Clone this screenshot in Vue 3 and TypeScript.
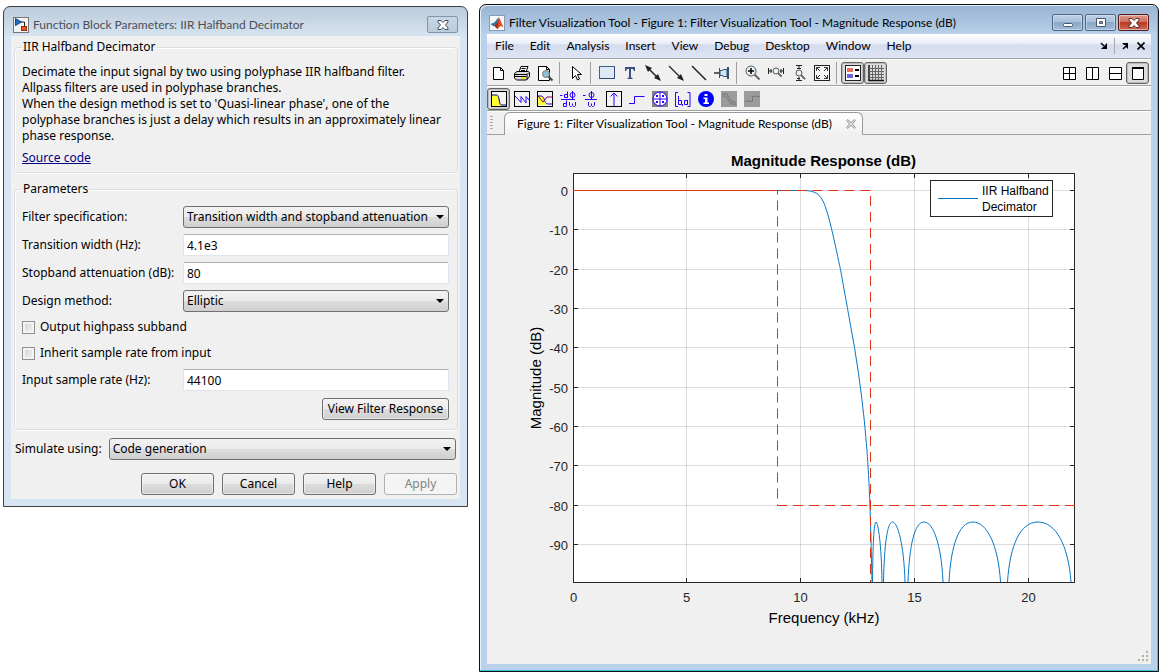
<script setup lang="ts">
import { ref } from 'vue'

interface Tool { id: string; label: string; art: string; active?: boolean; disabled?: boolean }

const spec = ref('Transition width and stopband attenuation')
const width = ref('4.1e3')
const attenuation = ref('80')
const method = ref('Elliptic')
const highpass = ref(false)
const inherit = ref(false)
const rate = ref('44100')
const simulate = ref('Code generation')

const menus = ['File', 'Edit', 'Analysis', 'Insert', 'View', 'Debug', 'Desktop', 'Window', 'Help']

const frame = '<rect x="1.5" y="1.5" width="15" height="15" fill="#f4f4f4" stroke="#000"/>'
const lens = (cx: number, cy: number, r: number, k: number) =>
  `<path d="M${cx + r * 0.7} ${cy + r * 0.7}l${k} ${k}" stroke="#666" stroke-width="2"/><circle cx="${cx}" cy="${cy}" r="${r}" fill="#e4f2fb" stroke="#555"/>`

const fileTools: Tool[] = [
  { id: 'new', label: 'New', art: '<path d="M3.500 3.500h7l3 3v9h-10z" fill="#fff" stroke="#000"/><path d="M10.500 3.500v3h3" fill="none" stroke="#000"/>' },
  { id: 'print', label: 'Print', art: '<path d="M6 8l2-5.500h7l-2 5.500" fill="#fff" stroke="#000"/><path d="M8.500 4.500h4M8 6.500h4" stroke="#000"/><path d="M1.500 9.500l2.500-2h11.500l1 1v4l-3 3.500h-10l-2-2z" fill="#ddd" stroke="#000"/><path d="M2 10.500h12l2-2M2 12.500h11M14 10.500v5" stroke="#000" fill="none"/><path d="M8 13h5v2h-5z" fill="#ee2"/>' },
  { id: 'preview', label: 'Print Preview', art: '<path d="M2.500 2.500h8l3 3v11h-11z" fill="#fff" stroke="#000"/><path d="M10.500 2.500v3h3" fill="none" stroke="#000"/><path d="M12 12l4.500 4.500" stroke="#444" stroke-width="2"/><circle cx="10" cy="10" r="3.500" fill="#8fc0d8" stroke="#777"/>' },
]
const pointerTools: Tool[] = [
  { id: 'pointer', label: 'Edit Plot', art: '<path d="M5.500 2.500v12l3-3 2 4.500 2-1-2-4.500h4z" fill="#fff" stroke="#000"/>' },
]
const drawTools: Tool[] = [
  { id: 'rect', label: 'Rectangle', art: '<rect x="1.500" y="2.500" width="15" height="12" fill="#dfe9f6" stroke="#41618f"/><path d="M16.500 3v11.500h-15" fill="none" stroke="#2e4a78"/>' },
  { id: 'text', label: 'Text Box', art: '<path d="M4 3h10v4h-1l-1-2h-2v8.500l1.500.5v1h-5v-1l1.500-.5v-8.500h-2l-1 2h-1z" fill="#36537f"/>' },
  { id: 'double', label: 'Double Arrow', art: '<path d="M3 3l12 12" stroke="#222" stroke-width="1.500"/><path d="M1 1l7 3-4 4zM17 17l-7-3 4-4z" fill="#222"/>' },
  { id: 'arrow', label: 'Arrow', art: '<path d="M2 2l12 12" stroke="#222" stroke-width="1.300"/><path d="M17 17l-7-3 4-4z" fill="#222"/>' },
  { id: 'line', label: 'Line', art: '<path d="M2 2l14 14" stroke="#222" stroke-width="1.500"/>' },
  { id: 'pin', label: 'Pin', art: '<path d="M1 9h5" stroke="#333" stroke-width="1.500"/><path d="M6.500 4v10M14.500 3v12M15.500 3v12" stroke="#34516e"/><path d="M7 6.500h2l2-1h3v7h-3l-2-1h-2z" fill="#cfe6f5" stroke="#34516e"/>' },
]
const zoomTools: Tool[] = [
  { id: 'zoom', label: 'Zoom', art: lens(7, 7, 5, 5) + '<path d="M4 7h6M7 4v6" stroke="#000" stroke-width="1.500"/>' },
  { id: 'zoomx', label: 'Zoom X', art: lens(9, 7, 3, 3.5) + '<path d="M1.500 4v6M16.500 4v6M2 7h3M13 7h3M4 5v4M14 5v4" stroke="#222"/>' },
  { id: 'zoomy', label: 'Zoom Y', art: lens(9, 9, 3, 4) + '<path d="M6 1.500h6M6 16.500h6M9 2v3M9 13v3M7 4.500h4M7 14.500h3" stroke="#222"/>' },
  { id: 'fit', label: 'Full View', art: '<rect x="1.500" y="1.500" width="15" height="15" fill="#f7f7f7" stroke="#222"/><path d="M3.500 7v-3.500h3.500M11 3.500h3.500v3.500M14.500 11v3.500h-3.500M7 14.500h-3.500v-3.500M4 4l3 3M14 4l-3 3M14 14l-3-3M4 14l3-3" stroke="#333" fill="none"/>' },
]
const viewTools: Tool[] = [
  { id: 'legend', label: 'Legend', active: true, art: '<rect x="1.500" y="1.500" width="15" height="15" fill="#fff" stroke="#222"/><path d="M3 4h6v4h-6z" fill="#e8705c"/><path d="M3 10h6v4h-6z" fill="#6a63d8"/><path d="M11 6h4M11 12h4" stroke="#000" stroke-width="2"/>' },
  { id: 'grid', label: 'Grid', active: true, art: '<path d="M2 1v15.500h15" stroke="#111" fill="none" stroke-width="1.500"/><path d="M5.500 1v15M8.500 1v15M11.500 1v15M14.500 1v15M2 4.500h15M2 7.500h15M2 10.500h15M2 13.500h15" stroke="#666"/>' },
]
const layoutTools: Tool[] = [
  { id: 'quad', label: 'Tile', art: '<path d="M3.500 3.500h12v12h-12zM9.500 3.500v12M3.500 9.500h12" fill="#fff" stroke="#000"/>' },
  { id: 'cols', label: 'Left/Right Tile', art: '<path d="M3.500 3.500h12v12h-12zM9.500 3.500v12" fill="#fff" stroke="#000"/>' },
  { id: 'rows', label: 'Top/Bottom Tile', art: '<path d="M3.500 3.500h12v12h-12zM3.500 9.500h12" fill="#fff" stroke="#000"/>' },
  { id: 'max', label: 'Maximize', active: true, art: '<path d="M3.500 3.500h11v12h-11z" fill="#fff" stroke="#000"/><path d="M3 4h12" stroke="#000" stroke-width="2"/>' },
]
const blue = 'stroke="#2a00ff" fill="none"'
const analysisTools: Tool[] = [
  { id: 'mag', label: 'Magnitude Response', active: true, art: frame + '<path d="M2 5h5c3 0 2 9 5 11h-10z" fill="#ffff30"/><path d="M2 5h4.500c3.500 0 2 10 5 10h5" stroke="#000080" fill="none"/>' },
  { id: 'phase', label: 'Phase Response', art: frame + `<path d="M2 6l6 6.500v-6l5 6.500v-6.500l3.500 4" ${blue}/>` },
  { id: 'both', label: 'Magnitude and Phase', art: frame + `<path d="M2 6h3c4 0 3 7 6 9h-9z" fill="#ffff30"/><path d="M2 6h3c4 0 3 8 7 8h4" ${blue}/><path d="M2 6l5 6 4-5h5.500" stroke="#800060" fill="none"/>` },
  { id: 'group', label: 'Group Delay', art: `<path d="M1 5.500h2.500M8.500 1.500v6.500M8.500 4.500h-3v3h3M13.500 1v8" ${blue}/><circle cx="13.500" cy="5" r="2.500" ${blue}/><path d="M2 9.500h14M7.500 10.500v6M7.500 13.500h-3v3h3M10.500 12v3.500l1 1h1l1-1 1 1h1l1-1v-3.500M13.500 13.500v2" ${blue}/>` },
  { id: 'pdelay', label: 'Phase Delay', art: `<path d="M1 5.500h2.500M9.500 1v8M3 9.500h12M6.500 12v3.500l1 1h1l1-1 1 1h1l1-1v-3.500M9.500 13.500v2" ${blue}/><circle cx="9.500" cy="5" r="2.500" ${blue}/>` },
  { id: 'impulse', label: 'Impulse Response', art: frame + `<path d="M9 3v13M5.500 6.500l3.500-3.500 3.500 3.500" ${blue}/>` },
  { id: 'step', label: 'Step Response', art: `<path d="M1 13.500h5.500v-7h10" ${blue}/>` },
  { id: 'pz', label: 'Pole-Zero Plot', art: '<path d="M1 1h16v16h-16z" fill="#808080"/><circle cx="9" cy="9" r="7" fill="#fff" stroke="#2a00ff"/><path d="M9 2v14M2 9h14M5 5l2 2M7 5l-2 2M11 5l2 2M13 5l-2 2M5 11l2 2M7 11l-2 2M11 11l2 2M13 11l-2 2" stroke="#2a00ff"/>' },
  { id: 'coef', label: 'Filter Coefficients', art: `<path d="M4 2.500h-2.500v14h2.500M13.500 2.500h2.500v14h-2.500M4.500 6v8.500M4.500 10.500h3v4h-3M13.500 10v5M13.500 10.500h-3v4h3M8.500 14v2" ${blue}/>` },
  { id: 'info', label: 'Filter Information', art: '<circle cx="9" cy="9" r="8" fill="#0000ff"/><path d="M7.500 4h3v2h-3zM6.500 7.500h4v5h1.500v1.500h-5.500v-1.500h1.500v-3.500h-1.500z" fill="#fff"/>' },
  { id: 'mask', label: 'Magnitude Response Estimate', disabled: true, art: '<path d="M1 1h16v16h-16z" fill="#9b9b9b"/><path d="M2 6h4l5 8h5M2 4h5l5 8h4" stroke="#777" fill="none"/>' },
  { id: 'noise', label: 'Round-off Noise', disabled: true, art: '<path d="M1 1h16v16h-16z" fill="#9b9b9b"/><path d="M2 11.500h3v-1l2 1h2.500v-5h3l1-1v1h3" stroke="#777" fill="none"/>' },
]
const topGroups: Tool[][] = [fileTools, pointerTools, drawTools, zoomTools, viewTools]

// Plot geometry in user units of the figure's view box.
const yTicks = [0, -10, -20, -30, -40, -50, -60, -70, -80, -90].map(v => ({ v, y: Math.round(190 - v * 3.935) + 0.5 }))
const xTicks = [0, 5, 10, 15, 20].map(v => ({ v, x: Math.floor(573 + v * 22.75) + 0.5 }))

const passband = 'M573.5 190.500H800C811 190.500 818 191 823 201C829 213 836 249 840.500 269.500L847.500 308.500L854.500 347.500C860 381 864 413 866.500 445C869 475 870.500 510 872 582.500'
const lobes = [[872.5, 876, 882], [883.5, 892.5, 905], [908, 924, 943], [949, 973, 1000.5], [1007.5, 1038, 1071]]
const lobePath = lobes.map(([a, p, b]) => {
  const l = p - a
  const r = b - p
  return `M${a} 582C${a + l * 0.08} 545 ${a + l * 0.42} 522 ${p} 522S${b - r * 0.08} 545 ${b} 582`
}).join('')
</script>

<template>
  <main class="desktop">
    <section class="dialog">
      <header class="dialog-title">
        <svg class="app-icon" viewBox="0 0 16 16" aria-hidden="true">
          <rect x=".5" y=".5" width="15" height="15" fill="#f4f4f4" stroke="#777" />
          <path d="M2.500 1.500v7l6-3.500z" fill="#1c6fc0" stroke="#0b4a8c" />
          <path d="M8 5h3.500v5" fill="none" stroke="#222" />
          <rect x="8.500" y="9.500" width="5" height="4" fill="#e8552b" stroke="#a02c10" />
        </svg>
        <h1>Function Block Parameters: IIR Halfband Decimator</h1>
        <button class="dialog-close" type="button" aria-label="Close">
          <svg viewBox="0 0 12 10"><path d="M1 .5h3l2 2 2-2h3v1.500l-2.500 3 2.500 3v1.500h-3l-2-2-2 2h-3v-1.500l2.500-3-2.500-3z" fill="#fff" stroke="#444b58" /></svg>
        </button>
      </header>
      <form class="dialog-body" @submit.prevent>
        <fieldset class="about">
          <legend>IIR Halfband Decimator</legend>
          <p>Decimate the input signal by two using polyphase IIR halfband filter.<br>Allpass filters are used in polyphase branches.<br>When the design method is set to 'Quasi-linear phase', one of the<br>polyphase branches is just a delay which results in an approximately linear<br>phase response.</p>
          <a href="#">Source code</a>
        </fieldset>
        <fieldset class="params">
          <legend>Parameters</legend>
          <div class="row">
            <label for="spec">Filter specification:</label>
            <select id="spec" v-model="spec"><option>Transition width and stopband attenuation</option></select>
          </div>
          <div class="row">
            <label for="tw">Transition width (Hz):</label>
            <input id="tw" v-model="width" type="text">
          </div>
          <div class="row">
            <label for="att">Stopband attenuation (dB):</label>
            <input id="att" v-model="attenuation" type="text">
          </div>
          <div class="row">
            <label for="method">Design method:</label>
            <select id="method" v-model="method"><option>Elliptic</option></select>
          </div>
          <label class="check"><input v-model="highpass" type="checkbox">Output highpass subband</label>
          <label class="check"><input v-model="inherit" type="checkbox">Inherit sample rate from input</label>
          <div class="row">
            <label for="rate">Input sample rate (Hz):</label>
            <input id="rate" v-model="rate" type="text">
          </div>
          <button class="push view" type="button">View Filter Response</button>
        </fieldset>
        <div class="simulate">
          <label for="sim">Simulate using:</label>
          <select id="sim" v-model="simulate"><option>Code generation</option></select>
        </div>
        <div class="actions">
          <button class="push" type="button">OK</button>
          <button class="push" type="button">Cancel</button>
          <button class="push" type="button">Help</button>
          <button class="push" type="button" disabled>Apply</button>
        </div>
      </form>
    </section>

    <section class="tool">
      <header class="tool-title">
        <svg class="app-icon" viewBox="0 0 16 16" aria-hidden="true">
          <rect x=".5" y=".5" width="15" height="15" fill="#f4f6fa" stroke="#8a99ad" />
          <path d="M1.500 9l4-1.500 3-4 1.500-1-2 6-3 3z" fill="#2a6ea8" />
          <path d="M10 2.500c1.500 2 2.500 6 4.500 9.500l-3-1-3 3-3-3 2.500-2z" fill="#d9541e" />
          <path d="M10 2.500c-.5 3-2 6-4.500 8.500l3 3z" fill="#a02a14" />
        </svg>
        <h1>Filter Visualization Tool - Figure 1: Filter Visualization Tool - Magnitude Response (dB)</h1>
        <div class="window-buttons">
          <button type="button" aria-label="Minimize"><svg viewBox="0 0 12 10"><rect x="1.500" y="5.500" width="9" height="3" rx="1" fill="#fff" stroke="#4b5666" /></svg></button>
          <button type="button" aria-label="Restore"><svg viewBox="0 0 12 10"><path d="M1.500.5h9v8h-9zM4.500 3.500v2h3v-2z" fill="#fff" fill-rule="evenodd" stroke="#4b5666" /></svg></button>
          <button class="red" type="button" aria-label="Close"><svg viewBox="0 0 12 10"><path d="M1 .5h3l2 2 2-2h3v1.500l-2.500 3 2.500 3v1.500h-3l-2-2-2 2h-3v-1.500l2.500-3-2.500-3z" fill="#fff" stroke="#5a3030" /></svg></button>
        </div>
      </header>
      <div class="tool-body">
        <nav class="menu">
          <button v-for="m in menus" :key="m" type="button">{{ m }}</button>
          <span class="dock">
            <button type="button" aria-label="Dock"><svg viewBox="0 0 8 8"><path d="M1 1l4 4" fill="none" stroke="#000" stroke-width="1.500" /><path d="M7 1v6h-6l2-2h2v-2z" /></svg></button>
            <i></i>
            <button type="button" aria-label="Undock"><svg viewBox="0 0 8 8"><path d="M1 1h6v6l-2-2v-2h-2z" /><path d="M2 7l4-4" stroke="#000" stroke-width="1.500" /></svg></button>
            <button class="shut" type="button" aria-label="Close figure"><svg viewBox="0 0 8 8"><path d="M.5.5l7 7M7.500.5l-7 7" stroke="#000" stroke-width="1.700" /></svg></button>
          </span>
        </nav>
        <div class="bar">
          <div v-for="(g, i) in topGroups" :key="i" class="group">
            <button v-for="t in g" :key="t.id" type="button" :class="['icon', { active: t.active }]" :aria-label="t.label">
              <svg viewBox="0 0 18 18" v-html="t.art"></svg>
            </button>
          </div>
          <div class="group right">
            <button v-for="t in layoutTools" :key="t.id" type="button" :class="['icon', { active: t.active }]" :aria-label="t.label">
              <svg viewBox="0 0 18 18" v-html="t.art"></svg>
            </button>
          </div>
        </div>
        <div class="bar second">
          <button v-for="t in analysisTools" :key="t.id" type="button" :class="['icon', { active: t.active }]" :aria-label="t.label" :disabled="t.disabled">
            <svg viewBox="0 0 18 18" v-html="t.art"></svg>
          </button>
        </div>
        <div class="tabs">
          <span class="grip"></span>
          <div class="tab">
            <span>Figure 1: Filter Visualization Tool - Magnitude Response (dB)</span>
            <button type="button" aria-label="Close tab"><svg viewBox="0 0 10 10"><path d="M1.500.5l3.500 3 3.500-3 1 1-3 3.500 3 3.500-1 1-3.500-3-3.500 3-1-1 3-3.500-3-3.500z" fill="#ddd" stroke="#999" /></svg></button>
          </div>
          <span class="rest"></span>
        </div>
        <div class="figure">
          <svg class="plot" viewBox="487 135 664 528" role="img" aria-label="Magnitude Response (dB)">
            <rect x="573.5" y="173.5" width="501" height="409" fill="#fff" />
            <g class="grid">
              <path v-for="t in xTicks" :key="'gx' + t.v" :d="`M${t.x} 174V582`" />
              <path v-for="t in yTicks" :key="'gy' + t.v" :d="`M574 ${t.y}H1074`" />
            </g>
            <g class="axis">
              <rect x="573.5" y="173.5" width="501" height="409" />
              <path v-for="t in xTicks" :key="'tx' + t.v" :d="`M${t.x} 173v5M${t.x} 583v-5`" />
              <path v-for="t in yTicks" :key="'ty' + t.v" :d="`M573 ${t.y}h5M1075 ${t.y}h-5`" />
            </g>
            <path class="curve" :d="passband + lobePath" />
            <g class="mask">
              <path d="M573 190.500H777.500" />
              <path class="dash" d="M780.500 190.500H871" />
              <path class="dash shifted" d="M777.500 190.500V505" />
              <path class="dash" d="M870.500 196V582" />
              <path class="dash" d="M777 505.500H1075" />
            </g>
            <g class="ticks">
              <text v-for="t in yTicks" :key="'ly' + t.v" x="568" :y="t.y + 5.5" text-anchor="end">{{ t.v }}</text>
              <text v-for="t in xTicks" :key="'lx' + t.v" :x="t.x" y="602" text-anchor="middle">{{ t.v }}</text>
            </g>
            <text class="heading" x="823.5" y="166" text-anchor="middle">Magnitude Response (dB)</text>
            <text class="name" x="824" y="623" text-anchor="middle">Frequency (kHz)</text>
            <text class="name" transform="translate(541 378) rotate(-90)" text-anchor="middle">Magnitude (dB)</text>
            <rect x="930.5" y="180.500" width="122" height="36" fill="#fff" stroke="#262626" />
            <path class="curve" d="M938 198.500h40" />
            <text class="key" x="982" y="195">IIR Halfband</text>
            <text class="key" x="982" y="211">Decimator</text>
          </svg>
          <svg class="sizer" viewBox="0 0 12 12" aria-hidden="true"><path d="M8 0h2v2h-2zM4 4h2v2h-2zM8 4h2v2h-2zM0 8h2v2h-2zM4 8h2v2h-2zM8 8h2v2h-2z" fill="#b8b0a0" /></svg>
        </div>
      </div>
    </section>
  </main>
</template>

<style>
body { background: #fff; }
</style>

<style scoped>
* { box-sizing: border-box; }
button, input, select { font: inherit; color: inherit; margin: 0; padding: 0; }
button { border: 0; background: none; }
h1, p { margin: 0; font: inherit; }
svg { display: block; }

.desktop {
  display: grid;
  grid-template-columns: 465fr 680fr;
  gap: 11px;
  align-items: start;
  min-height: 100vh;
  padding: 4px 2px 0 3px;
}

.dialog {
  margin-top: 2px;
  border: 1px solid #3c4148;
  border-radius: 7px 7px 0 0;
  background: linear-gradient(#bbcbdb, #d7e4f2 30px);
  padding: 0 7px 7px;
  font: 12px/16px "Noto Sans", "Open Sans", sans-serif;
  color: #000;
}
.dialog-title, .tool-title {
  display: flex;
  align-items: center;
  font: 12px/16px Lato, "Open Sans", sans-serif;
}
.dialog-title { height: 29px; padding: 6px 2px 0 2px; color: #4b5058; }
.app-icon { width: 16px; height: 16px; margin-right: 4px; }
.dialog-title h1 { flex: 1; white-space: nowrap; }
.dialog-close {
  display: flex;
  justify-content: center;
  align-items: center;
  width: 31px;
  height: 17px;
  border: 1px solid #8394ab;
  border-radius: 2px;
  background: linear-gradient(#c8d6e5, #b9cadc);
}
.dialog-close svg { width: 12px; height: 10px; }
.dialog-body { background: #f0f0f0; padding: 3px 2px 4px 3px; }

fieldset {
  margin: 0;
  border: 1px solid #d5dfe5;
  border-radius: 4px;
  box-shadow: inset 1px 1px #fff, 0 1px #fff;
  min-width: 0;
}
legend { padding: 0 1px; }
.about { height: 134px; padding: 9px 7px 0; }
.about p { white-space: nowrap; }
.about a { display: inline-block; margin-top: 6px; color: #000080; }
.params { display: flow-root; margin-top: 8px; padding: 9px 8px 9px 7px; }
.row { display: grid; grid-template-columns: 161px 1fr; align-items: center; height: 22px; margin-bottom: 6px; }
.row > * { min-width: 0; }
.simulate label { flex: none; }
input[type="text"] {
  width: 100%;
  height: 22px;
  border: 1px solid #dfe4ec;
  border-top-color: #abadb3;
  border-radius: 2px;
  background: #fff;
  padding: 0 3px;
}
select {
  appearance: none;
  width: 100%;
  height: 22px;
  border: 1px solid #707070;
  border-radius: 3px;
  padding: 0 16px 0 3px;
  background: linear-gradient(#f2f2f2, #ebebeb 49%, #dddddd 50%, #cfcfcf);
}
.row:has(select), .simulate { position: relative; }
.row:has(select)::after, .simulate::after {
  content: "";
  position: absolute;
  right: 5px;
  top: 9px;
  border: 4px solid transparent;
  border-top-color: #000;
  border-bottom: 0;
  pointer-events: none;
}
.check { display: flex; align-items: center; gap: 5px; height: 16px; margin: 7px 0 10px; }
.check + .check { margin-bottom: 8px; }
.check input {
  appearance: none;
  width: 13px;
  height: 13px;
  border: 1px solid #8e8f8f;
  background: linear-gradient(135deg, #cbcfd5, #f6f6f6);
  box-shadow: inset 0 0 0 2px #f4f4f4;
}
.push {
  height: 22px;
  border: 1px solid #707070;
  border-radius: 3px;
  background: linear-gradient(#f2f2f2, #ebebeb 49%, #dddddd 50%, #cfcfcf);
  box-shadow: inset 0 0 0 1px #fafafa88;
  white-space: nowrap;
}
.push:disabled { border-color: #adb2b5; background: #f4f4f4; color: #838383; }
.view { display: block; margin: 7px 0 0 auto; width: 127px; }
.simulate { display: flex; align-items: center; gap: 7px; margin: 8px 2px 0 1px; white-space: nowrap; }
.actions { display: flex; justify-content: flex-end; gap: 8px; margin: 13px 1px 0 0; }
.actions .push { width: 73px; }

.tool {
  display: flex;
  flex-direction: column;
  min-height: calc(100vh - 4px);
  border: 1px solid #111;
  border-radius: 7px 7px 0 0;
  box-shadow: inset -1px -1px #35c8e0, inset 1px 1px #e4f0fa;
  background: linear-gradient(#98b4d2, #b9d1ea 30px);
  padding: 0 7px 7px;
  font: 12px/16px Lato, "Open Sans", sans-serif;
}
.tool-title { height: 29px; padding: 6px 2px 0; color: #000; }
.tool-title h1 { flex: 1; white-space: nowrap; }
.window-buttons { display: flex; gap: 2px; }
.window-buttons button {
  display: flex;
  justify-content: center;
  align-items: center;
  width: 31px;
  height: 17px;
  border: 1px solid #4e6584;
  border-radius: 2px;
  background: linear-gradient(#bdd0e6, #a9c0da 45%, #8ba8c8 50%, #a3bcd8);
  box-shadow: inset 0 0 0 1px #d7e4f299;
}
.window-buttons .red {
  border-color: #5b1a1a;
  background: linear-gradient(#e09a8a, #d0705f 45%, #b93a26 50%, #cf6a50);
}
.window-buttons svg { width: 12px; height: 10px; }
.tool-body { flex: 1; display: flex; flex-direction: column; background: #f0f0f0; }
.menu {
  display: flex;
  align-items: center;
  gap: 16px;
  height: 25px;
  padding: 0 6px 0 8px;
  background: linear-gradient(#fff, #e9edf8 40%, #d4dbed 45%, #dfe5f4);
  border-bottom: 1px solid #a0a0a0;
}
.dock { display: flex; align-items: center; gap: 6px; margin-left: auto; }
.dock svg { width: 8px; height: 8px; }
.dock i { width: 1px; height: 16px; background: #aaa; }
.shut { margin-left: 2px; }
.bar {
  display: flex;
  align-items: center;
  height: 27px;
  border-top: 1px solid #fff;
  border-bottom: 1px solid #a0a0a0;
}
.second { height: 25px; }
.group { display: flex; }
.group + .group:not(.right) { margin-left: 3px; border-left: 1px solid #a0a0a0; padding-left: 4px; }
.right { margin-left: auto; padding-right: 2px; }
.icon { display: flex; justify-content: center; align-items: center; width: 23px; height: 22px; }
.icon.active { border: 1px solid #666; border-radius: 3px; background: #dcdcdc; box-shadow: inset 0 0 0 1px #bbb; }
.icon svg { flex: none; width: 18px; height: 18px; }
.tabs { display: flex; height: 24px; border-top: 1px solid #fff; }
.grip, .rest { border-bottom: 1px solid #a0a0a0; }
.grip { width: 17px; background: repeating-linear-gradient(#aaa 0 1px, transparent 1px 3px) no-repeat 3px 4px / 3px 15px; }
.rest { flex: 1; }
.tab {
  display: flex;
  align-items: center;
  gap: 14px;
  padding: 0 6px 0 12px;
  border: 1px solid #999;
  border-bottom: 0;
  border-radius: 6px 6px 0 0;
  background: linear-gradient(#fff, #f0f0f0);
  white-space: nowrap;
}
.tab svg { width: 10px; height: 10px; }
.figure { flex: 1; position: relative; }
.plot { width: 100%; height: auto; font-family: "Liberation Sans", Arial, sans-serif; }
.sizer { position: absolute; right: 1px; bottom: 1px; width: 12px; height: 12px; }
.grid path { stroke: #262626; stroke-opacity: .16; shape-rendering: crispEdges; }
.axis { fill: none; stroke: #262626; shape-rendering: crispEdges; }
.curve { fill: none; stroke: #0a78c4; }
.mask { fill: none; stroke: #dd3311; }
.dash { stroke-dasharray: 10 6; }
.shifted { stroke-dashoffset: 6; }
.ticks { font-size: 13px; fill: #262626; }
.heading { font-size: 15px; font-weight: bold; }
.name { font-size: 15px; }
.key { font-size: 12px; }
</style>
